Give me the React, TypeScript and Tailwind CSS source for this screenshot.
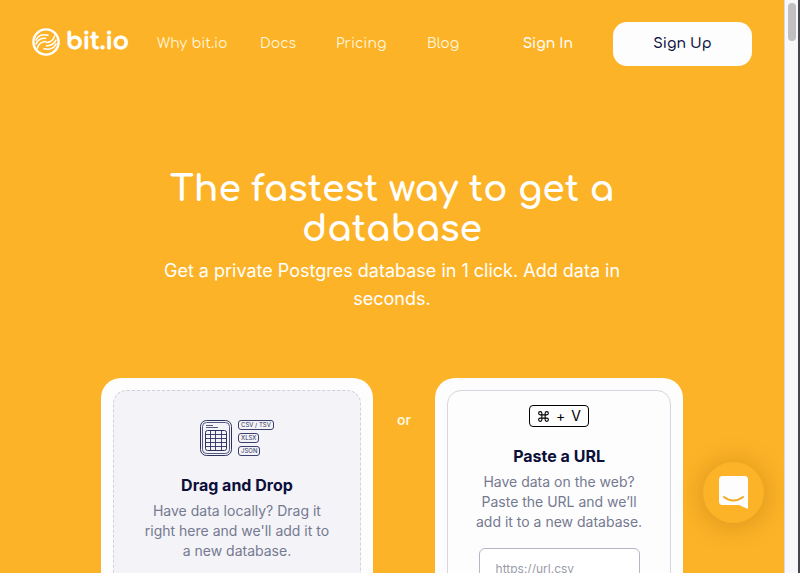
import React from "react";

const rounded = "font-['Comfortaa','Quicksand','Inter',sans-serif]";

function LogoMark() {
  return (
    <svg viewBox="0 0 28 28" className="size-7" fill="none" stroke="white" strokeLinecap="round" aria-hidden="true">
      <circle cx="14" cy="14" r="12.6" strokeWidth="2.4" />
      <path d="M4 12c2-4.500 6.500-6 12-4.800" strokeWidth="1.600" />
      <path d="M4 15.800c2.500-5 5.500-5.800 9.500-5.500" strokeWidth="1.600" />
      <path d="M5.500 20c1.500-5.500 4.500-6.200 8-6.500" strokeWidth="1.600" />
      <path d="M24 16c-2 4.500-6.500 6-12 4.800" strokeWidth="1.600" />
      <path d="M24 12.200c-2.500 5-5.500 5.800-9.500 5.500" strokeWidth="1.600" />
      <path d="M22.500 8c-1.500 5.500-4.500 6.200-8 6.500" strokeWidth="1.600" />
    </svg>
  );
}

function SheetIcon() {
  return (
    <svg viewBox="0 0 32 36" className="h-9 w-8" fill="none" stroke="#2d3160" aria-hidden="true">
      <rect x="0.500" y="0.500" width="31" height="35" rx="6" strokeWidth="1" />
      <rect x="2.500" y="2.500" width="27" height="31" rx="4" strokeWidth="0.800" />
      <path d="M6 5.500h7M6 7.500h12" strokeWidth="0.800" />
      <rect x="5.500" y="10.500" width="21" height="20" rx="2" strokeWidth="1" />
      <path d="M10.500 10.500v20M15.500 10.500v20M21.500 10.500v20M5.500 14.500h21M5.500 18.500h21M5.500 22.500h21M5.500 26.500h21" strokeWidth="0.900" />
    </svg>
  );
}

function FileTag({ children }: { children: React.ReactNode }) {
  return (
    <span className="flex h-[10px] items-center rounded-[3px] border border-[#3b3f6b] px-[2px] text-[6px] leading-none text-[#2d3160]">
      {children}
    </span>
  );
}

function Header() {
  return (
    <header className="flex items-center px-8 pt-[22px]">
      <a href="#home" className="flex w-[125px] items-center gap-[6px] pb-1 text-white">
        <LogoMark />
        <span className={`text-[24px] leading-8 font-bold [-webkit-text-stroke:1px_white] ${rounded}`}>bit.io</span>
      </a>
      <nav className={`flex text-sm text-[#fff6dc] ${rounded}`}>
        <a href="#why" className="w-[103px]">Why bit.io</a>
        <a href="#docs" className="w-[76px]">Docs</a>
        <a href="#pricing" className="w-[91px]">Pricing</a>
        <a href="#blog">Blog</a>
      </nav>
      <div className={`ml-auto flex items-center gap-10 text-sm font-semibold ${rounded}`}>
        <a href="#signin" className="text-white">Sign In</a>
        <button type="button" className="h-11 w-[139px] rounded-[14px] bg-[#fdfdfe] text-[#0b0f3a]">Sign Up</button>
      </div>
    </header>
  );
}

function Hero() {
  return (
    <section className="mx-auto mt-[103px] max-w-[500px] text-center text-white">
      <h1 className={`text-[36px] leading-10 font-bold ${rounded}`}>The fastest way to get a database</h1>
      <p className="mt-2 text-[18px] leading-7">Get a private Postgres database in 1 click. Add data in seconds.</p>
    </section>
  );
}

function Cards() {
  return (
    <section className="mt-[65px] flex justify-center gap-6">
      <article className="w-[272px] rounded-[20px] bg-[#fdfdfe] p-3">
        <div className="flex h-[300px] flex-col items-center rounded-[14px] border border-dashed border-[#cfd1dc] bg-[#f3f3f8] px-7 pt-[29px] text-center">
          <div className="flex gap-[6px]">
            <SheetIcon />
            <div className="flex flex-col items-start justify-between">
              <FileTag>CSV / TSV</FileTag>
              <FileTag>XLSX</FileTag>
              <FileTag>JSON</FileTag>
            </div>
          </div>
          <h2 className="mt-[17px] text-base leading-6 font-bold text-[#0b0f3a]">Drag and Drop</h2>
          <p className="mt-1 text-sm leading-5 text-[#757a90]">Have data locally? Drag it right here and we'll add it to a new database.</p>
        </div>
      </article>
      <span className="mt-8 text-sm leading-5 font-semibold text-[#fff6dc]">or</span>
      <article className="w-[248px] rounded-[20px] bg-[#fdfdfe] p-3">
        <div className="flex h-[300px] flex-col items-center rounded-[14px] border border-[#d5d6df] px-5 pt-[14px] text-center">
          <kbd className="flex h-[22px] w-[60px] items-center justify-center gap-[6px] rounded-[4px] border border-black font-['Inter',sans-serif] text-sm text-black">
            <svg viewBox="0 0 24 24" className="size-[13px]" fill="none" stroke="currentColor" strokeWidth="2" aria-label="Command">
              <path d="M15 6v12a3 3 0 1 0 3-3H6a3 3 0 1 0 3 3V6a3 3 0 1 0-3 3h12a3 3 0 1 0-3-3" />
            </svg>
            <span>+</span>
            <span>V</span>
          </kbd>
          <h2 className="mt-[17px] text-base leading-6 font-bold text-[#0b0f3a]">Paste a URL</h2>
          <p className="mt-1 text-sm leading-5 text-[#757a90]">Have data on the web? Paste the URL and we’ll add it to a new database.</p>
          <input
            type="url"
            aria-label="Data URL"
            placeholder="https://url.csv"
            className="mt-4 h-10 w-[161px] rounded-[6px] border border-[#b4b6c6] bg-white px-4 text-xs text-[#0b0f3a] placeholder:text-[#9a9ca8]"
          />
        </div>
      </article>
    </section>
  );
}

function ChatLauncher() {
  return (
    <button
      type="button"
      aria-label="Open chat"
      className="absolute right-5 bottom-[50px] flex size-[61px] items-center justify-center rounded-full bg-[#fdb327] shadow-[0_2px_24px_4px_rgba(120,70,0,0.22)]"
    >
      <svg viewBox="0 0 29 33" className="h-[33px] w-[29px]" aria-hidden="true">
        <path d="M3.500 0H25.500A3.500 3.500 0 0 1 29 3.500V33L20 29H3.500A3.500 3.500 0 0 1 0 25.500V3.500A3.500 3.500 0 0 1 3.500 0Z" fill="#fdfdfe" />
        <path d="M5 21c5.500 4.500 13.500 4.500 19 0" fill="none" stroke="#f0ac25" strokeWidth="2" strokeLinecap="round" />
      </svg>
    </button>
  );
}

export default function App() {
  return (
    <div className="flex h-screen overflow-hidden bg-[#fdb327] font-['Inter',sans-serif]">
      <main className="relative flex-1 overflow-hidden">
        <Header />
        <Hero />
        <Cards />
        <ChatLauncher />
      </main>
      <div className="w-4 border-r-2 border-l border-l-[#d9d8df] border-r-[#45454d] bg-[#f8f8fb] px-[3px] pt-[3px]">
        <div className="h-[38px] w-2 rounded-full bg-[#c1bfc2]" />
      </div>
    </div>
  );
}
